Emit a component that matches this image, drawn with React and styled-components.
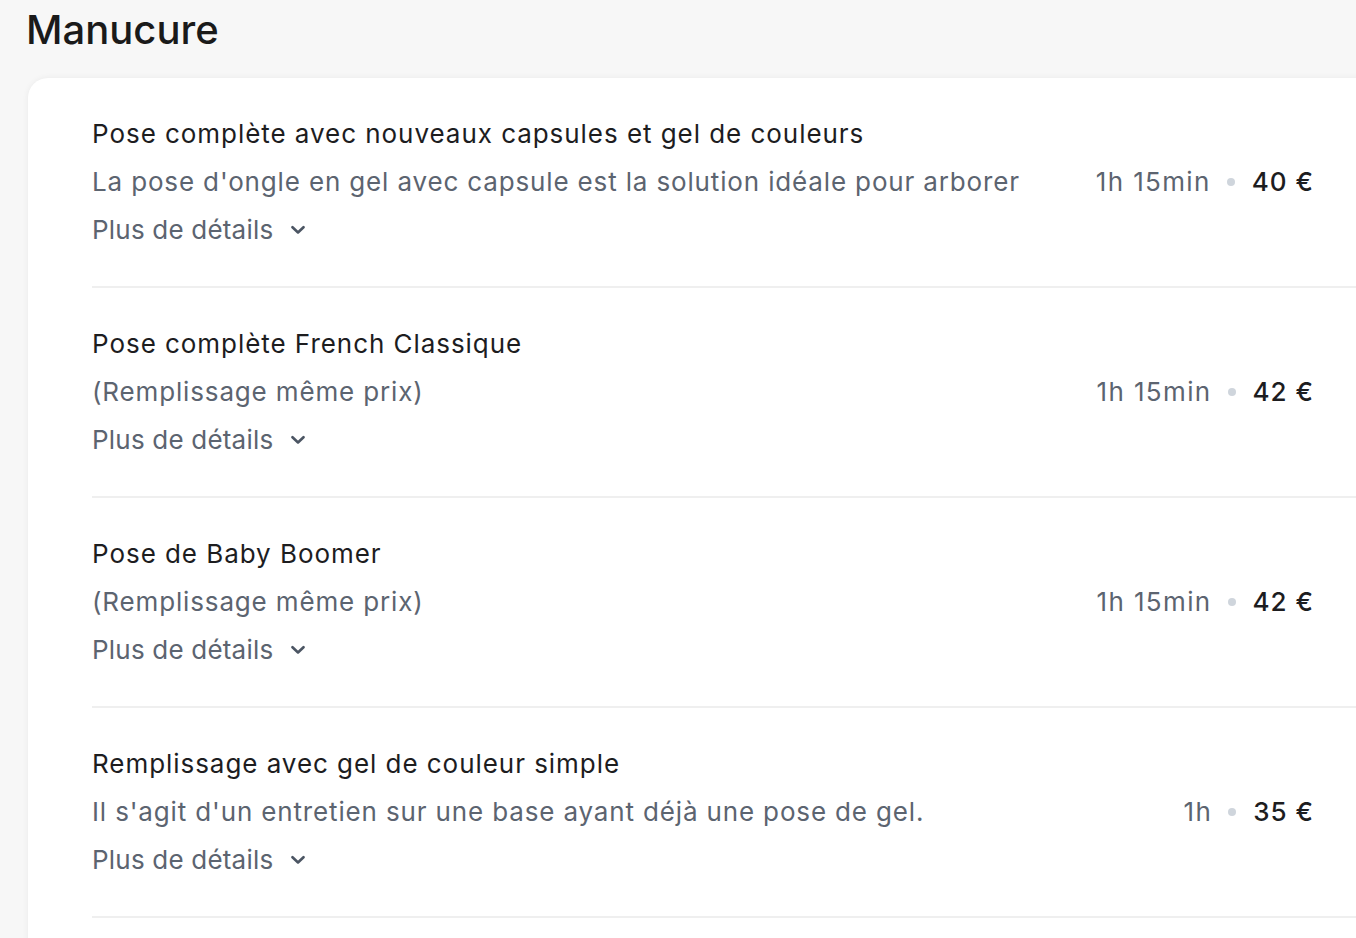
import React from "react";
import styled, { createGlobalStyle } from "styled-components";

const Global = createGlobalStyle`
  html, body { margin: 0; padding: 0; background: #f7f7f7; overflow: hidden; }
  body { font-family: Inter, "Noto Sans", sans-serif; -webkit-font-smoothing: antialiased; }
`;

const Page = styled.div`
  padding: 0 0 0 28px;
  width: 1500px;
`;

const Heading = styled.h2`
  margin: 0 0 0 -2px;
  padding-top: 6px;
  font-size: 40px;
  line-height: 48px;
  font-weight: 500;
  color: #1a1a1a;
`;

const Card = styled.div`
  margin-top: 24px;
  width: 1430px;
  min-height: 900px;
  background: #fff;
  border-radius: 20px;
  box-shadow: 0 0 6px rgba(0, 0, 0, 0.06);
  padding: 0 0 0 64px;
  box-sizing: border-box;
`;

const Row = styled.div`
  display: flex;
  align-items: center;
  padding: 32px 144px 32px 0;
  border-bottom: 2px solid #efefef;
`;

const Info = styled.div`
  flex: 1;
  min-width: 0;
  display: flex;
  flex-direction: column;
`;

const Title = styled.div`
  font-size: 26px;
  line-height: 48px;
  letter-spacing: 0.95px;
  color: #1d1d1f;
`;

const Desc = styled.div`
  font-size: 26px;
  line-height: 48px;
  letter-spacing: 0.85px;
  color: #5c6470;
  white-space: nowrap;
  overflow: hidden;
`;

const More = styled.div`
  display: flex;
  align-items: center;
  gap: 18px;
  font-size: 26px;
  line-height: 48px;
  letter-spacing: 0.2px;
  color: #5c6470;
`;

const Meta = styled.div`
  display: flex;
  align-items: center;
  font-size: 26px;
  line-height: 48px;
  white-space: nowrap;
  margin-left: 70px;
`;

const Duration = styled.span`
  color: #5c6470;
  letter-spacing: 1.35px;
`;

const Dot = styled.span`
  width: 8px;
  height: 8px;
  border-radius: 50%;
  background: #cfd5dc;
  margin: 0 17px 0 16px;
`;

const Price = styled.span`
  color: #1d1d1f;
  font-weight: 500;
  letter-spacing: 1px;
`;

const Chevron = () => (
  <svg width="14" height="10" viewBox="0 0 14 10" fill="none">
    <path d="M1.5 2.2 L7 7.5 L12.5 2.2" stroke="#4b5563" strokeWidth="2.6" strokeLinecap="round" strokeLinejoin="round" />
  </svg>
);

const services = [
  {
    title: "Pose complète avec nouveaux capsules et gel de couleurs",
    desc: "La pose d'ongle en gel avec capsule est la solution idéale pour arborer",
    duration: "1h 15min",
    price: "40 €",
  },
  {
    title: "Pose complète French Classique",
    desc: "(Remplissage même prix)",
    duration: "1h 15min",
    price: "42 €",
  },
  {
    title: "Pose de Baby Boomer",
    desc: "(Remplissage même prix)",
    duration: "1h 15min",
    price: "42 €",
  },
  {
    title: "Remplissage avec gel de couleur simple",
    desc: "Il s'agit d'un entretien sur une base ayant déjà une pose de gel.",
    duration: "1h",
    price: "35 €",
  },
];

export default function App() {
  return (
    <Page>
      <Global />
      <Heading>Manucure</Heading>
      <Card>
        {services.map((s) => (
          <Row key={s.title}>
            <Info>
              <Title>{s.title}</Title>
              <Desc>{s.desc}</Desc>
              <More>
                Plus de détails
                <Chevron />
              </More>
            </Info>
            <Meta>
              <Duration>{s.duration}</Duration>
              <Dot />
              <Price>{s.price}</Price>
            </Meta>
          </Row>
        ))}
      </Card>
    </Page>
  );
}
